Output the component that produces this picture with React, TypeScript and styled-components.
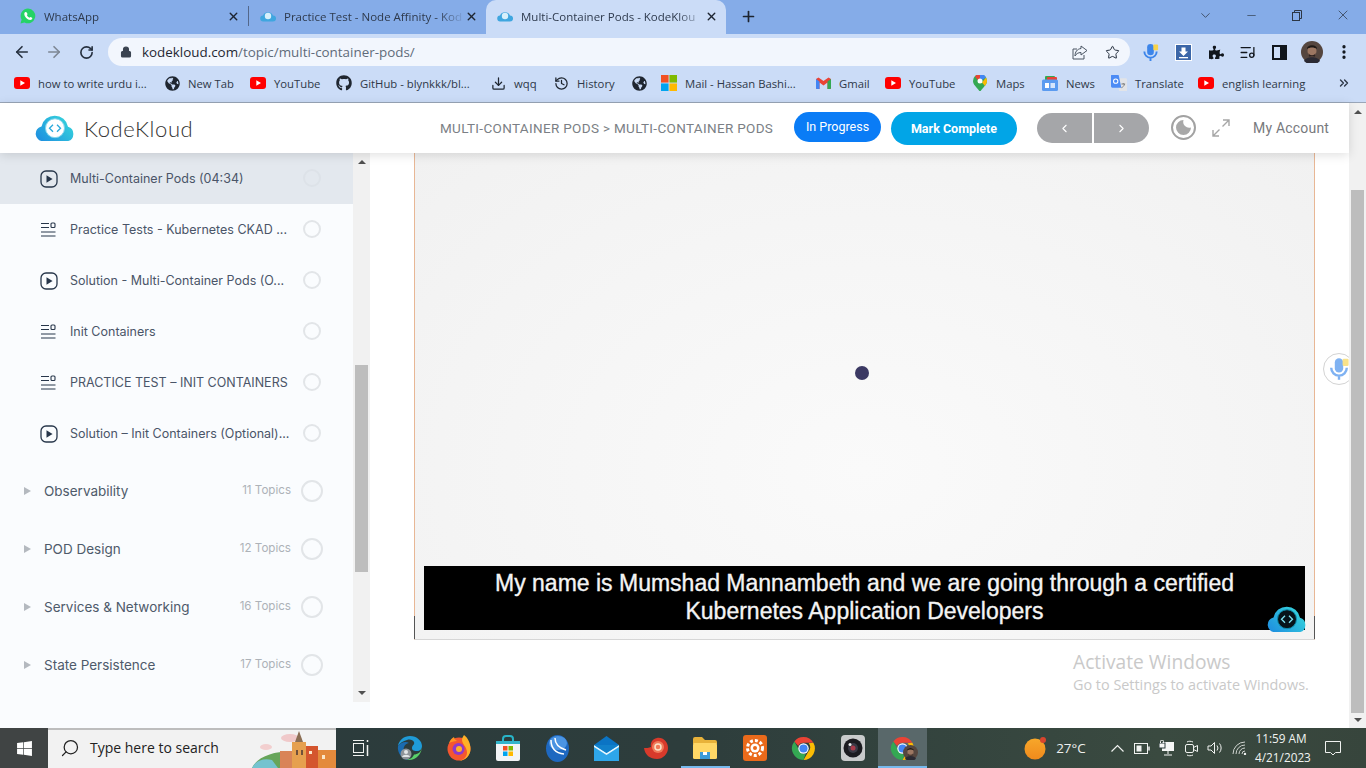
import React from "react";
import styled, { createGlobalStyle } from "styled-components";
import { FaGithub, FaGlobeAmericas, FaPuzzlePiece, FaWindows } from "react-icons/fa";
import { ArrowLeft, ArrowRight, RotateCw, Lock, Star, X, Plus, ChevronDown, Minus, Download, History, EllipsisVertical, ChevronsRight, ChevronLeft, ChevronRight, ListMusic, Search } from "lucide-react";

const Global = createGlobalStyle`
  html, body { margin: 0; padding: 0; background: #fff; overflow: hidden; }
  * { box-sizing: border-box; }
`;

const Screen = styled.div`
  width: 1366px; height: 768px; display: flex; flex-direction: column; overflow: hidden; position: relative;
  font-family: "Open Sans", "Noto Sans", sans-serif;
`;

/* Browser chrome */
const TabStrip = styled.div`
  height: 34px; background: #85ace8; display: flex; align-items: flex-end; padding-left: 8px; flex: none;
`;
const Tab = styled.div<{ $w: number; $active?: boolean; $pad: number }>`
  width: ${p => p.$w}px; height: 34px; display: flex; align-items: center; padding: 0 8px 2px ${p => p.$pad}px;
  background: ${p => (p.$active ? "#cbdcf7" : "transparent")}; border-radius: ${p => (p.$active ? "10px 10px 0 0" : "0")};
  font-size: 11.5px; color: #2e3a4d; flex: none;
`;
const TabTitle = styled.span`
  flex: 1; margin-left: 8px; overflow: hidden; white-space: nowrap;
  -webkit-mask-image: linear-gradient(to right, #000 85%, transparent);
  mask-image: linear-gradient(to right, #000 85%, transparent);
`;
const TabDivider = styled.div`
  width: 1px; height: 20px; background: #53678a; align-self: center; flex: none; margin-top: -2px;
`;
const NewTab = styled.div`
  width: 44px; height: 34px; padding-bottom: 2px; display: flex; align-items: center; justify-content: center; color: #1d2430; flex: none;
`;
const WindowControls = styled.div`
  margin-left: auto; display: flex; height: 34px; align-items: flex-start; color: #2c3644;
`;
const WinButton = styled.div`
  width: 46px; height: 30px; display: flex; align-items: center; justify-content: center;
`;

const Toolbar = styled.div`
  height: 34px; background: #cbdcf7; display: flex; align-items: center; padding: 2px 0 0 6px; flex: none;
`;
const ToolButton = styled.div<{ $w?: number; $c?: string }>`
  width: ${p => p.$w ?? 32}px; height: 28px; display: flex; align-items: center; justify-content: center; color: ${p => p.$c ?? "#26303f"}; flex: none;
`;
const UrlBar = styled.div`
  width: 1022px; height: 28px; margin: 0 4px 0 6px; background: #f2f6fd; border-radius: 14px; display: flex; align-items: center; padding-left: 12px; padding-right: 2px; flex: none; color: #3a4350;
`;
const UrlText = styled.div`
  margin-left: 10px; font-size: 13.4px; color: #5f6b7a; flex: 1; white-space: nowrap;
  b { font-weight: 400; color: #1f2733; }
`;

const BookmarkBar = styled.div`
  height: 35px; background: #cbdcf7; border-bottom: 1px solid #9aa6b8; display: flex; align-items: center; padding: 0 0 4px 14px; flex: none;
`;
const Bookmark = styled.div<{ $w: number }>`
  width: ${p => p.$w}px; display: flex; align-items: center; gap: 8px; font-size: 11.3px; color: #2e3848; white-space: nowrap; flex: none; overflow: hidden;
`;
const BmIcon = styled.span`
  width: 16px; height: 16px; display: flex; align-items: center; justify-content: center; flex: none;
`;
const BmMore = styled.div`
  margin-left: auto; margin-right: 15px; color: #2e3848; display: flex;
`;

/* Page */
const Page = styled.div`
  flex: 1; min-height: 0; display: flex; background: #fff;
`;
const PageMain = styled.div`
  flex: 1; min-width: 0; display: flex; flex-direction: column;
`;
const Header = styled.header`
  height: 50px; background: #fff; display: flex; align-items: center; padding-left: 35px; flex: none; position: relative; z-index: 3;
  box-shadow: 0 2px 10px rgba(0,0,0,.13);
`;
const Brand = styled.div`
  display: flex; align-items: center; gap: 9px; width: 405px; flex: none;
`;
const BrandName = styled.span`
  font-family: Lato, sans-serif; font-weight: 300; font-size: 22px; letter-spacing: .6px; color: #333;
`;
const Crumbs = styled.div`
  width: 354px; flex: none; font-family: Roboto, sans-serif; font-size: 13.5px; letter-spacing: .33px; color: #7b7f85; white-space: nowrap;
`;
const ProgressBtn = styled.div`
  width: 87px; height: 30px; margin-top: -3px; border-radius: 15px; background: #0a7cf6; color: #fff; font-family: Roboto, sans-serif; font-size: 12.5px;
  display: flex; align-items: center; justify-content: center; flex: none;
`;
const CompleteBtn = styled.div`
  width: 126px; height: 33px; margin-left: 10px; border-radius: 17px; background: #01a5e7; color: #fff; font-family: Roboto, sans-serif; font-weight: 700; font-size: 12.5px;
  display: flex; align-items: center; justify-content: center; flex: none;
`;
const Pager = styled.div`
  display: flex; gap: 2px; margin-left: 20px; flex: none;
`;
const PagerBtn = styled.div<{ $side: "l" | "r" }>`
  width: 55px; height: 30px; background: #a5a6a9; color: #fff; display: flex; align-items: center; justify-content: center;
  border-radius: ${p => (p.$side === "l" ? "15px 0 0 15px" : "0 15px 15px 0")};
`;
const ThemeToggle = styled.div`
  width: 25px; height: 25px; margin-left: 22px; margin-top: -1px; border-radius: 50%; border: 2px solid #a2a2a2; display: flex; align-items: center; justify-content: center; flex: none;
`;
const FullScreen = styled.div`
  margin-left: 15px; margin-top: -1px; display: flex; flex: none;
`;
const Account = styled.div`
  margin-left: 22px; font-family: Roboto, sans-serif; font-size: 14px; letter-spacing: .2px; color: #77797d; margin-top: -1px; white-space: nowrap;
`;

const Body = styled.div`
  flex: 1; min-height: 0; display: flex;
`;
const Sidebar = styled.aside`
  width: 370px; flex: none; display: flex; background: #fafcfe;
`;
const TopicList = styled.div`
  width: 353px; font-family: Inter, sans-serif; flex: none;
`;
const Lesson = styled.div<{ $active?: boolean }>`
  height: 51px; display: flex; align-items: center; padding-left: 40px; background: ${p => (p.$active ? "#e3e8ee" : "transparent")};
`;
const LessonIcon = styled.span`
  width: 18px; height: 18px; display: flex; align-items: center; flex: none;
`;
const LessonName = styled.div`
  width: 220px; margin-left: 12px; font-size: 12.5px; color: #4a5568; white-space: nowrap;
`;
const Check = styled.div<{ $size: number; $faint?: boolean }>`
  width: ${p => p.$size}px; height: ${p => p.$size}px; border-radius: 50%; border: 2px solid ${p => (p.$faint ? "#dde2e8" : "#e2e5e8")}; flex: none;
`;
const LessonCheck = styled(Check)`
  margin-left: 13px; margin-top: -1px;
`;
const Section = styled.div<{ $first?: boolean }>`
  height: 58px; display: flex; align-items: center; padding-left: 24px; margin-top: ${p => (p.$first ? "3px" : "0")};
`;
const Caret = styled.div`
  width: 0; height: 0; border-left: 7px solid #b4b9bf; border-top: 4.5px solid transparent; border-bottom: 4.5px solid transparent; flex: none;
`;
const SectionName = styled.div`
  margin-left: 13px; width: 190px; font-size: 13.5px; color: #4e5a6a; white-space: nowrap;
`;
const TopicCount = styled.div`
  width: 57px; text-align: right; font-size: 11.6px; color: #adb2b8; margin-top: -2px; white-space: nowrap; flex: none;
`;
const SectionCheck = styled(Check)`
  margin-left: 10px;
`;
const SideScroll = styled.div`
  width: 17px; height: 549px; background: #f1f1f1; display: flex; flex-direction: column; align-items: center; flex: none;
`;
const Arrow = styled.div<{ $dir: "up" | "down" }>`
  width: 0; height: 0; flex: none; border-left: 4px solid transparent; border-right: 4px solid transparent;
  ${p => (p.$dir === "up" ? "border-bottom: 4px solid #505050;" : "border-top: 4px solid #505050;")}
`;
const SideArrowUp = styled(Arrow)` margin-top: 7px; `;
const SideThumb = styled.div`
  width: 13px; height: 207px; margin-top: 201px; background: #bdbdbd; flex: none;
`;
const SideArrowDown = styled(Arrow)` margin-top: auto; margin-bottom: 7px; `;

const Content = styled.main`
  flex: 1; min-width: 0; padding: 0 34px 0 44px; position: relative; overflow: hidden;
`;
const Video = styled.div`
  height: 487px; background: radial-gradient(ellipse at 50% 65%, #fafafa 0%, #f6f6f6 45%, #f1f1f1 100%);
  border-left: 1px solid #e8b795; border-right: 1px solid #e8b795; border-bottom: 1px solid #d6d6d6;
  display: flex; flex-direction: column; justify-content: flex-end; padding: 0 9px 9px; position: relative;
  &::before, &::after { content: ""; position: absolute; bottom: 0; width: 1px; height: 23px; background: #555; }
  &::before { left: -1px; } &::after { right: -1px; }
`;
const Dot = styled.div`
  position: absolute; left: 440px; top: 213px; width: 14px; height: 14px; border-radius: 50%; background: #3b3963;
`;
const Caption = styled.div`
  height: 64px; background: #000; color: #f4f4f4; text-align: center; font-family: "Liberation Sans", Arial, sans-serif; font-size: 23px; line-height: 28px; padding-top: 3px;
  -webkit-text-stroke: .35px #f4f4f4;
`;
const VideoLogo = styled.div`
  position: absolute; right: 7px; bottom: 7px; display: flex;
`;
const FloatMic = styled.div`
  position: absolute; left: 953px; top: 200px; width: 32px; height: 32px; border-radius: 50%; background: #fff; border: 1px solid #d3d3d3; display: flex; align-items: center; justify-content: center;
`;
const Watermark = styled.div`
  position: absolute; left: 703px; top: 496px; color: #c9c9c9; font-family: "Open Sans", sans-serif; white-space: nowrap;
`;
const WmTitle = styled.div` font-size: 19.2px; line-height: 26px; `;
const WmSub = styled.div` font-size: 14.4px; line-height: 20px; `;

const PageScroll = styled.div`
  width: 17px; flex: none; background: #f1f1f1; display: flex; flex-direction: column; align-items: center;
`;
const PageArrowUp = styled(Arrow)` margin-top: 7px; `;
const PageThumb = styled.div`
  width: 13px; height: 523px; margin-top: 76px; background: #bdbdbd; flex: none;
`;
const PageArrowDown = styled(Arrow)` margin-top: auto; margin-bottom: 6px; `;

/* Taskbar */
const Taskbar = styled.footer`
  height: 40px; flex: none; display: flex; align-items: stretch; background: linear-gradient(to right, #2b3a3c, #2d3d3c 50%, #3a4a40 85%, #37453c);
  color: #f1f3f1; font-family: "Open Sans", sans-serif;
`;
const Start = styled.div`
  width: 48px; background: #404444; display: flex; align-items: center; justify-content: center; color: #fff; flex: none;
`;
const SearchBox = styled.div`
  width: 288px; background: #f2f2f2; border-top: 2px solid #bdbdbd; display: flex; align-items: center; padding: 0 0 3px 12px; position: relative; overflow: hidden; color: #222; font-size: 14px; flex: none;
`;
const SearchGlyph = styled(Search)` transform: scaleX(-1); flex: none; `;
const SearchText = styled.span` margin-left: 10px; `;
const Scene = styled.svg` position: absolute; right: 0; bottom: 0; `;
const TaskIcon = styled.div<{ $active?: boolean; $open?: boolean }>`
  width: 49.25px; display: flex; align-items: center; justify-content: center; flex: none; position: relative;
  background: ${p => (p.$active ? "#59686a" : "transparent")};
  border-bottom: 2px solid ${p => (p.$open ? "#76b9ed" : "transparent")};
  border-top: 2px solid transparent;
`;
const TaskBadge = styled.div`
  position: absolute; left: 25px; top: 15px; display: flex;
`;
const Tray = styled.div`
  margin-left: auto; display: flex; align-items: center; flex: none;
`;
const Weather = styled.div`
  display: flex; align-items: center; gap: 8px; font-size: 13.4px; margin-right: 20px; color: #eef0ee;
`;
const TrayIcon = styled.div`
  width: 24.4px; display: flex; align-items: center; justify-content: center; flex: none;
`;
const Clock = styled.div`
  width: 52px; margin-left: 3px; text-align: center; font-size: 11.8px; line-height: 19px; white-space: nowrap;
`;
const Notify = styled.div`
  width: 59px; display: flex; align-items: center; justify-content: center; padding-right: 7px;
`;

/* Drawings */
const KKLogo = ({ w = 40, dark = false }: { w?: number; dark?: boolean }) => (
  <svg width={w} height={w * 0.66} viewBox="0 0 40 26">
    <defs>
      <linearGradient id={dark ? "kkd" : "kkl"} x1="0" y1="1" x2="1" y2="0.3">
        <stop offset="0" stopColor="#1d8be0" />
        <stop offset="1" stopColor="#35d3dc" />
      </linearGradient>
    </defs>
    <path d="M8 26a7.5 7.5 0 0 1-1.5-14.8A13.5 13.5 0 0 1 33 11.5 7.5 7.5 0 0 1 32.5 26Z" fill={`url(#${dark ? "kkd" : "kkl"})`} />
    <circle cx="20" cy="13" r="9.5" fill={dark ? "#07131a" : "#fff"} stroke={dark ? "#0d8fb0" : "#7fd4ec"} strokeWidth="1" />
    <path d="M18 9.5 14.5 13l3.5 3.5M22 9.5l3.5 3.5-3.5 3.5" fill="none" stroke={dark ? "#7fe2f0" : "#29a9dc"} strokeWidth="1.3" />
  </svg>
);
const Favicon = () => (
  <svg width="16" height="12" viewBox="0 0 16 12">
    <path d="M3.5 11.5a3 3 0 0 1-.5-6A5.5 5.5 0 0 1 13 5.4a3 3 0 0 1 0 6.1Z" fill="#3fa6df" />
    <circle cx="8" cy="6" r="3.2" fill="#d7f0fb" />
  </svg>
);
const PlayIcon = () => (
  <svg width="18" height="18" viewBox="0 0 18 18" fill="none">
    <rect x="1" y="1" width="16" height="16" rx="5" stroke="#27364a" strokeWidth="1.3" />
    <path d="M6.5 5.3v7.4L12.6 9Z" fill="#27364a" />
  </svg>
);
const QuizIcon = () => (
  <svg width="16" height="16" viewBox="0 0 16 16" fill="none" stroke="#27364a" strokeWidth="1.1">
    <path d="M1 1.500h8M1 5.500h8M1 10h14.500M1 14h14.500" />
    <rect x="11" y="1" width="4" height="4.500" rx="1" />
  </svg>
);
const Moon = () => (
  <svg width="17" height="17" viewBox="0 0 17 17"><path d="M8.5 1a7.5 7.5 0 1 0 7.5 7.5A6 6 0 0 1 8.5 1Z" fill="#a8a8a8" /></svg>
);
const ExpandDiag = () => (
  <svg width="20" height="20" viewBox="0 0 20 20" fill="none" stroke="#a6a6a6" strokeWidth="1.4">
    <path d="M12 2h6v6M18 2l-6.500 6.500M8 18H2v-6M2 18l6.500-6.500" />
  </svg>
);
const Mic = ({ s = 20 }: { s?: number }) => (
  <svg width={s} height={s} viewBox="0 0 20 20" fill="none">
    <rect x="6.5" y="1" width="7" height="12" rx="3.5" fill="#3c85ea" />
    <path d="M3.5 9a6.5 6.5 0 0 0 13 0M10 15.5V19" stroke="#3c85ea" strokeWidth="2" />
    <rect x="13" y="1.5" width="5" height="6" rx="1" fill="#f8d34a" />
  </svg>
);
const FloatingMicIcon = () => (
  <svg width="24" height="24" viewBox="0 0 20 20" fill="none">
    <rect x="6.5" y="1" width="7" height="12" rx="3.5" fill="#7fb2f2" />
    <path d="M3.5 9a6.5 6.5 0 0 0 13 0M10 15.5V19" stroke="#7fb2f2" strokeWidth="2" />
    <rect x="13" y="1.5" width="5" height="6" rx="1" fill="#f8e28a" />
  </svg>
);
const Microsoft = () => (
  <svg width="18" height="18" viewBox="0 0 18 18">
    <rect width="8.5" height="8.5" fill="#f25022" /><rect x="9.5" width="8.5" height="8.5" fill="#7fba00" />
    <rect y="9.5" width="8.5" height="8.5" fill="#00a4ef" /><rect x="9.5" y="9.5" width="8.5" height="8.5" fill="#ffb900" />
  </svg>
);
const Gmail = () => (
  <svg width="15" height="12" viewBox="0 0 15 12">
    <path d="M0 2v9a1 1 0 0 0 1 1h2.5V5.5L7.500 8.500 11.500 5.500V12H14a1 1 0 0 0 1-1V2L12.500.5 7.500 4 2.500.5Z" fill="#ea4335" />
    <path d="M0 11V2l3.500 2.600V12H1a1 1 0 0 1-1-1Z" fill="#4285f4" />
    <path d="M15 11V2l-3.500 2.600V12H14a1 1 0 0 0 1-1Z" fill="#34a853" />
  </svg>
);
const Maps = () => (
  <svg width="14" height="18" viewBox="0 0 14 18">
    <path d="M7 0a7 7 0 0 1 7 7c0 4-4 6-7 11C4 13 0 11 0 7a7 7 0 0 1 7-7Z" fill="#34a853" />
    <path d="M2 2.500A7 7 0 0 1 7 0v4.500A2.500 2.500 0 0 0 4.700 6Z" fill="#ea4335" />
    <path d="M7 0a7 7 0 0 1 6 3.500L9.200 6A2.500 2.500 0 0 0 7 4.500Z" fill="#4285f4" />
    <path d="M13 3.500A7 7 0 0 1 14 7c0 2-1 3.500-2 5L9 8.500Z" fill="#fbbc04" />
    <circle cx="7" cy="7" r="2.500" fill="#fff" />
  </svg>
);
const News = () => (
  <svg width="16" height="15" viewBox="0 0 16 15">
    <rect x="3" y="0" width="10" height="6" rx="1" fill="#34a853" />
    <rect x="5" y="1" width="10" height="6" rx="1" fill="#ea4335" />
    <rect x="0" y="3.500" width="16" height="11.500" rx="1.500" fill="#5b9bf0" />
    <rect x="3" y="7" width="4" height="5" fill="#fff" /><rect x="8.500" y="7" width="4.500" height="5" fill="#d6e6fc" />
  </svg>
);
const Translate = () => (
  <svg width="17" height="19" viewBox="0 0 17 19">
    <path d="M6 4h9.500a1.500 1.500 0 0 1 1.500 1.500v12a1.500 1.500 0 0 1-1.500 1.500H9Z" fill="#e2e4e8" />
    <path d="M1.500 0H8l3 14H1.500A1.500 1.500 0 0 1 0 12.500v-11A1.500 1.500 0 0 1 1.500 0Z" fill="#4c8bf5" />
    <circle cx="5" cy="7" r="2.300" fill="none" stroke="#fff" strokeWidth="1.100" />
    <path d="M11 10h4M13 9v1.500M14.500 10c-.5 2-2 3.500-3.500 4" stroke="#777" fill="none" strokeWidth=".9" />
  </svg>
);
const WhatsAppBadge = () => (
  <svg width="16" height="16" viewBox="0 0 16 16"><path d="M8 .5A7.400 7.400 0 0 0 1.600 11.600L.5 15.500l4-1A7.400 7.400 0 1 0 8 .5Z" fill="#25d366" /><path d="M5.300 4c-.5.3-1 1-1 1.900 0 2.600 3.200 6 6 6 1 0 1.700-.6 2-1.200l-.2-1-1.800-.8-.8.900c-1-.3-2.300-1.600-2.700-2.700l.8-.8-.8-1.900Z" fill="#fff" /></svg>
);
const YT = () => (
  <svg width="16" height="12" viewBox="0 0 16 12"><rect width="16" height="12" rx="3" fill="#f00" /><path d="M6.300 3.300v5.400L11 6Z" fill="#fff" /></svg>
);
const Chrome = ({ s = 24 }: { s?: number }) => (
  <svg width={s} height={s} viewBox="0 0 24 24">
    <path d="M12 1a11 11 0 0 1 9.500 5.500H12a5.500 5.500 0 0 0-5 3.200L3.200 5.300A11 11 0 0 1 12 1Z" fill="#ea4335" />
    <path d="M21.500 6.500A11 11 0 0 1 12 23l4.600-8A5.500 5.500 0 0 0 16.900 7Z" fill="#fbbc04" />
    <path d="M12 23A11 11 0 0 1 3.200 5.300L7.800 13.500A5.500 5.500 0 0 0 14 17.200Z" fill="#34a853" />
    <circle cx="12" cy="12" r="5" fill="#fff" /><circle cx="12" cy="12" r="3.900" fill="#4285f4" />
  </svg>
);
const Avatar = ({ s = 22 }: { s?: number }) => (
  <svg width={s} height={s} viewBox="0 0 22 22">
    <circle cx="11" cy="11" r="11" fill="#55463f" />
    <path d="M3 20c2-5 14-5 16 0a11 11 0 0 1-16 0Z" fill="#2b2a33" />
    <ellipse cx="11" cy="10" rx="4.500" ry="5.500" fill="#9c7762" />
    <path d="M6 8c0-5 10-5 10 0-3-2-7-2-10 0Z" fill="#1e1916" />
    <path d="M7.500 12c1 3 6 3 7 0l-.5 3.500h-6Z" fill="#2e2320" />
  </svg>
);
const ExtDownload = () => (
  <svg width="17" height="17" viewBox="0 0 17 17">
    <rect width="17" height="17" fill="#fff" /><rect x="1" y="1" width="15" height="15" fill="#3b66a8" />
    <path d="M6.500 3.500h4v4h2.500l-4.500 4.500L4 7.500h2.500Z" fill="#fff" /><rect x="4" y="13" width="9" height="1.300" fill="#fff" />
  </svg>
);
const SidePanel = () => (
  <svg width="15" height="15" viewBox="0 0 15 15"><rect x="1" y="1" width="13" height="13" fill="none" stroke="#10151c" strokeWidth="2" /><rect x="8" y="1" width="6" height="13" fill="#10151c" /></svg>
);
const Restore = () => (
  <svg width="10" height="11" viewBox="0 0 10 11" fill="none" stroke="#2c3644"><rect x=".5" y="2.500" width="7" height="8" /><path d="M2.500 2.500V.5h7v8h-2" /></svg>
);
const ShareIcon = () => (
  <svg width="16" height="16" viewBox="0 0 16 16" fill="none" stroke="#4a5563" strokeWidth="1"><path d="M9 2l6 4.500L9 11V8.500C6 8.500 4 10 3 12c0-4 2-7 6-7.500Z" /><path d="M12 11v4H1V5h4" /></svg>
);
const TaskView = () => (
  <svg width="16" height="16" viewBox="0 0 16 16" fill="none" stroke="#f0f2f0"><path d="M0 .5h11M0 15.500h11" /><rect x=".5" y="3.500" width="10" height="9" /><path d="M14.500 0v2M14.500 5v11" strokeWidth="1.500" /></svg>
);
const Edge = () => (
  <svg width="26" height="26" viewBox="0 0 26 26">
    <path d="M1 11C2 5 7 1 13 1c7 0 12 5 12 10 0 3-2 5-5 5-4 0-5-1-5-3 0-3 3-3 2-6-1-2-4-3-7-2C6 6 3 8 1 11Z" fill="#1f9bd8" />
    <path d="M25 11c0 8-6 14-13 14-1 0-2 0-3-.500 4 0 7-2 8-5 3 0 8-2 8-8.500Z" fill="#5ad06a" />
    <path d="M1 11c3-4 8-5 11-3-5 1-6 5-5 9 .5 3 2 6 4 8C5 24 0 18 1 11Z" fill="#1a6bb0" />
    <circle cx="9" cy="19" r="5.500" fill="#8f9499" /><circle cx="9" cy="17" r="2" fill="#e3e6e8" /><path d="M5 22c1-3 7-3 8 0Z" fill="#e3e6e8" />
  </svg>
);
const Firefox = () => (
  <svg width="24" height="26" viewBox="0 0 24 26">
    <circle cx="12" cy="14" r="11.500" fill="#f4562f" />
    <path d="M23.500 14A11.500 11.500 0 0 1 12 25.500c5 0 8-4 8-8 0-6-5-8-5-13C15 3 16 1.500 17 0c4 3 6.500 8 6.500 14Z" fill="#ffb028" />
    <circle cx="11.500" cy="14" r="6" fill="#8f3ac9" /><circle cx="12" cy="14" r="3" fill="#ffb028" />
    <path d="M2 8c1-3 3-5 5-6 0 2 2 3 3 4-3 0-6 1-8 2Z" fill="#ff9423" />
  </svg>
);
const Store = () => (
  <svg width="24" height="26" viewBox="0 0 24 26">
    <rect y="6" width="24" height="20" rx="2" fill="#f2f4f6" />
    <path d="M7 8V4a3 3 0 0 1 3-3h4a3 3 0 0 1 3 3v4" fill="none" stroke="#28b4c8" strokeWidth="2" />
    <rect y="6" width="24" height="3" fill="#32b5cb" />
    <rect x="7" y="11" width="4.500" height="4.500" fill="#f25022" /><rect x="12.500" y="11" width="4.500" height="4.500" fill="#7fba00" />
    <rect x="7" y="16.500" width="4.500" height="4.500" fill="#00a4ef" /><rect x="12.500" y="16.500" width="4.500" height="4.500" fill="#ffb900" />
  </svg>
);
const WinBox = () => (
  <svg width="23" height="27" viewBox="0 0 23 27">
    <ellipse cx="11.500" cy="13.500" rx="11.500" ry="13.500" fill="#1e68c0" />
    <ellipse cx="12" cy="8" rx="9" ry="7" fill="#4b94e2" />
    <path d="M5 5c0 8 4 13 13 14M9 3c0 7 4 10 11 12" fill="none" stroke="#fff" strokeWidth="1.500" />
  </svg>
);
const Mail = () => (
  <svg width="25" height="25" viewBox="0 0 25 25">
    <path d="M0 9 12.500 0 25 9v16H0Z" fill="#0b74c4" /><rect y="9" width="25" height="16" fill="#2ea6ea" />
    <path d="M0 9l12.500 8L25 9v2l-12.500 8L0 11Z" fill="#e9f6fd" />
    <path d="M0 9h25l-12.500 8Z" fill="#1180ca" />
  </svg>
);
const Shell = () => (
  <svg width="26" height="24" viewBox="0 0 26 24">
    <path d="M1 12c1 7 6 11 13 11 6 0 11-5 11-11S20 1 14 2C9 3 7 7 8 11c-2 1-5 1-7 1Z" fill="#d83a2b" />
    <circle cx="15" cy="11" r="6" fill="#f07a5a" /><circle cx="15" cy="11" r="3" fill="none" stroke="#fbe3c8" strokeWidth="1.500" />
  </svg>
);
const Folder = () => (
  <svg width="24" height="22" viewBox="0 0 24 22">
    <path d="M0 2a2 2 0 0 1 2-2h7l3 3h10a2 2 0 0 1 2 2v2H0Z" fill="#e8b23a" />
    <rect y="6" width="24" height="16" rx="1.500" fill="#ffd766" />
    <rect x="7" y="15" width="10" height="7" fill="#3b9bd8" /><rect x="10" y="15" width="4" height="3" fill="#fff" />
  </svg>
);
const GearApp = () => (
  <svg width="24" height="26" viewBox="0 0 24 26">
    <rect width="24" height="26" rx="3" fill="#ea6a1b" />
    <circle cx="12" cy="13" r="7.500" fill="none" stroke="#fff" strokeWidth="3" strokeDasharray="3 2" />
    <circle cx="12" cy="13" r="4.500" fill="#fff" /><circle cx="12" cy="13" r="2" fill="#ea6a1b" />
  </svg>
);
const Camera = () => (
  <svg width="24" height="26" viewBox="0 0 24 26">
    <rect width="24" height="26" rx="4" fill="#c9cbcc" />
    <circle cx="12" cy="13" r="9.500" fill="#1b1b20" /><circle cx="12" cy="13" r="5" fill="#3a3a46" /><circle cx="12" cy="13" r="2.500" fill="#a83a4a" /><circle cx="9" cy="9.500" r="1.500" fill="#eee" />
  </svg>
);
const WeatherBall = () => (
  <svg width="24" height="24" viewBox="0 0 24 24">
    <defs><linearGradient id="sun" x1="0" y1="0" x2="0" y2="1"><stop offset="0" stopColor="#f7a72a" /><stop offset="1" stopColor="#f08a1c" /></linearGradient></defs>
    <circle cx="11" cy="13" r="10.500" fill="url(#sun)" /><circle cx="19" cy="4" r="3" fill="#d8452e" />
  </svg>
);
const TrayBattery = () => (
  <svg width="16" height="11" viewBox="0 0 16 11" fill="none" stroke="#f0f2f0"><rect x=".5" y=".5" width="13" height="10" /><rect x="2.500" y="2.500" width="5" height="6" fill="#f0f2f0" stroke="none" /><path d="M15 3.500v4" strokeWidth="1.500" /></svg>
);
const TrayNetwork = () => (
  <svg width="15" height="16" viewBox="0 0 15 16"><rect x="3" y="2" width="12" height="9" fill="#f6f7f6" /><path d="M9 11v3M5 15h8" stroke="#f6f7f6" /><rect x="0" y="3" width="6" height="5" fill="#f6f7f6" stroke="#2d3d3c" /><path d="M1.500 3V1.500a1.500 1.500 0 0 1 3 0V3" fill="none" stroke="#f6f7f6" /></svg>
);
const TrayCamera = () => (
  <svg width="13" height="17" viewBox="0 0 13 17" fill="none" stroke="#f0f2f0"><rect x=".5" y="4.500" width="8" height="8" rx="1.500" /><path d="M8.500 7.500 12.500 5.500v6l-4-2M2 2c1.500-1 4-1 6 0M2 15c1.500 1 4 1 6 0" /></svg>
);
const TraySpeaker = () => (
  <svg width="16" height="14" viewBox="0 0 16 14" fill="none" stroke="#f0f2f0"><path d="M1 5h3l3.500-3.500v11L4 9H1ZM10 4.500a4 4 0 0 1 0 5M12.500 2.500a7 7 0 0 1 0 9" /></svg>
);
const TrayWifi = () => (
  <svg width="15" height="14" viewBox="0 0 15 14" fill="none" stroke="#cfd3cf"><path d="M1 13A12 12 0 0 1 13 1M4 13a9 9 0 0 1 9-9M7 13a6 6 0 0 1 6-6M10 13a3 3 0 0 1 3-3" /><circle cx="13" cy="13" r="1.200" fill="#f0f2f0" stroke="none" /></svg>
);
const TrayUp = () => (
  <svg width="13" height="8" viewBox="0 0 13 8" fill="none" stroke="#f0f2f0" strokeWidth="1.200"><path d="M.5 7.500 6.500 1.500l6 6" /></svg>
);
const ActionCenter = () => (
  <svg width="16" height="15" viewBox="0 0 16 15" fill="none" stroke="#f0f2f0"><path d="M.5.500h15v11h-5L8 14l-2.500-2.500h-5Z" /></svg>
);
const CityScene = () => (
  <Scene width="84" height="38" viewBox="0 0 84 38">
    <ellipse cx="14" cy="17" rx="6" ry="3" fill="#f2cfcf" />
    <ellipse cx="38" cy="8" rx="9" ry="4" fill="#f0c9ca" />
    <path d="M0 38c6-14 30-18 44-16l40 2v14Z" fill="#67a55a" />
    <path d="M0 38c4-8 12-10 20-8l6 8Z" fill="#74c3cf" />
    <rect x="28" y="21" width="14" height="17" fill="#d98458" />
    <rect x="40" y="12" width="14" height="26" fill="#e6a04f" />
    <path d="M47 1l4 11h-8Z" fill="#8b6e54" />
    <rect x="54" y="16" width="12" height="22" fill="#d4552e" />
    <rect x="66" y="20" width="18" height="18" fill="#e48a3c" />
    <rect x="44" y="20" width="2" height="5" fill="#70503a" /><rect x="49" y="20" width="2" height="5" fill="#70503a" />
    <rect x="57" y="21" width="3" height="3" fill="#fbe6c8" /><rect x="70" y="25" width="3" height="4" fill="#fbe6c8" />
  </Scene>
);

const lessons: { name: string; kind: "play" | "quiz" }[] = [
  { name: "Multi-Container Pods (04:34)", kind: "play" },
  { name: "Practice Tests - Kubernetes CKAD ...", kind: "quiz" },
  { name: "Solution - Multi-Container Pods (O...", kind: "play" },
  { name: "Init Containers", kind: "quiz" },
  { name: "PRACTICE TEST – INIT CONTAINERS", kind: "quiz" },
  { name: "Solution – Init Containers (Optional)...", kind: "play" },
];
const sections = [
  ["Observability", "11 Topics"],
  ["POD Design", "12 Topics"],
  ["Services & Networking", "16 Topics"],
  ["State Persistence", "17 Topics"],
];
const bookmarks: { w: number; icon: React.ReactNode; label?: string }[] = [
  { w: 150, icon: <YT />, label: "how to write urdu i..." },
  { w: 86, icon: <FaGlobeAmericas size={15} color="#1f2630" />, label: "New Tab" },
  { w: 86, icon: <YT />, label: "YouTube" },
  { w: 154, icon: <FaGithub size={16} color="#1f2630" />, label: "GitHub - blynkkk/bl..." },
  { w: 63, icon: <Download size={15} color="#1f2630" />, label: "wqq" },
  { w: 78, icon: <History size={15} color="#1f2630" />, label: "History" },
  { w: 30, icon: <FaGlobeAmericas size={15} color="#1f2630" /> },
  { w: 154, icon: <Microsoft />, label: "Mail - Hassan Bashi..." },
  { w: 70, icon: <Gmail />, label: "Gmail" },
  { w: 87, icon: <YT />, label: "YouTube" },
  { w: 70, icon: <Maps />, label: "Maps" },
  { w: 69, icon: <News />, label: "News" },
  { w: 87, icon: <Translate />, label: "Translate" },
  { w: 115, icon: <YT />, label: "english learning" },
];
const taskApps: { node: React.ReactNode; open?: boolean; active?: boolean; badge?: boolean }[] = [
  { node: <TaskView /> }, { node: <Edge /> }, { node: <Firefox /> }, { node: <Store /> }, { node: <WinBox /> }, { node: <Mail /> },
  { node: <Shell /> }, { node: <Folder />, open: true }, { node: <GearApp /> }, { node: <Chrome s={25} /> }, { node: <Camera /> },
  { node: <Chrome s={25} />, open: true, active: true, badge: true },
];

export default function App() {
  return (
    <Screen>
      <Global />
      <TabStrip>
        <Tab $w={240} $pad={12}>
          <BmIcon><WhatsAppBadge /></BmIcon>
          <TabTitle>WhatsApp</TabTitle>
          <X size={13} strokeWidth={2.6} color="#1d2430" />
        </Tab>
        <TabDivider />
        <Tab $w={237} $pad={11}>
          <BmIcon><Favicon /></BmIcon>
          <TabTitle>Practice Test - Node Affinity - Kod</TabTitle>
          <X size={13} strokeWidth={2.6} color="#1d2430" />
        </Tab>
        <Tab $w={240} $active $pad={11}>
          <BmIcon><Favicon /></BmIcon>
          <TabTitle>Multi-Container Pods - KodeKlou</TabTitle>
          <X size={13} strokeWidth={2.6} color="#1d2430" />
        </Tab>
        <NewTab><Plus size={17} strokeWidth={2.4} /></NewTab>
        <WindowControls>
          <WinButton><ChevronDown size={15} strokeWidth={1.2} /></WinButton>
          <WinButton><Minus size={13} strokeWidth={1.2} /></WinButton>
          <WinButton><Restore /></WinButton>
          <WinButton><X size={16} strokeWidth={1.1} /></WinButton>
        </WindowControls>
      </TabStrip>

      <Toolbar>
        <ToolButton><ArrowLeft size={18} strokeWidth={2.2} /></ToolButton>
        <ToolButton $c="#7d8794"><ArrowRight size={18} strokeWidth={2.2} /></ToolButton>
        <ToolButton><RotateCw size={15} strokeWidth={2.6} /></ToolButton>
        <UrlBar>
          <Lock size={12} fill="#3a4350" strokeWidth={2.2} />
          <UrlText><b>kodekloud.com</b>/topic/multi-container-pods/</UrlText>
          <ToolButton><ShareIcon /></ToolButton>
          <ToolButton><Star size={15} strokeWidth={1.6} /></ToolButton>
        </UrlBar>
        <ToolButton $w={33}><Mic s={19} /></ToolButton>
        <ToolButton $w={33}><ExtDownload /></ToolButton>
        <ToolButton $w={32} $c="#11161d"><FaPuzzlePiece size={15} /></ToolButton>
        <ToolButton $w={31} $c="#11161d"><ListMusic size={17} strokeWidth={1.8} /></ToolButton>
        <ToolButton $w={33}><SidePanel /></ToolButton>
        <ToolButton $w={32}><Avatar /></ToolButton>
        <ToolButton $w={32} $c="#11161d"><EllipsisVertical size={18} strokeWidth={2.4} /></ToolButton>
      </Toolbar>

      <BookmarkBar>
        {bookmarks.map((b, i) => (
          <Bookmark key={i} $w={b.w}>
            <BmIcon>{b.icon}</BmIcon>
            {b.label && <span>{b.label}</span>}
          </Bookmark>
        ))}
        <BmMore><ChevronsRight size={14} strokeWidth={2.4} /></BmMore>
      </BookmarkBar>

      <Page>
        <PageMain>
          <Header>
            <Brand>
              <KKLogo />
              <BrandName>KodeKloud</BrandName>
            </Brand>
            <Crumbs>MULTI-CONTAINER PODS &gt; MULTI-CONTAINER PODS</Crumbs>
            <ProgressBtn>In Progress</ProgressBtn>
            <CompleteBtn>Mark Complete</CompleteBtn>
            <Pager>
              <PagerBtn $side="l"><ChevronLeft size={13} strokeWidth={2} /></PagerBtn>
              <PagerBtn $side="r"><ChevronRight size={13} strokeWidth={2} /></PagerBtn>
            </Pager>
            <ThemeToggle><Moon /></ThemeToggle>
            <FullScreen><ExpandDiag /></FullScreen>
            <Account>My Account</Account>
          </Header>
          <Body>
            <Sidebar>
              <TopicList>
                {lessons.map((l, i) => (
                  <Lesson key={l.name} $active={i === 0}>
                    <LessonIcon>{l.kind === "play" ? <PlayIcon /> : <QuizIcon />}</LessonIcon>
                    <LessonName>{l.name}</LessonName>
                    <LessonCheck $size={18} $faint={i === 0} />
                  </Lesson>
                ))}
                {sections.map(([name, count], i) => (
                  <Section key={name} $first={i === 0}>
                    <Caret />
                    <SectionName>{name}</SectionName>
                    <TopicCount>{count}</TopicCount>
                    <SectionCheck $size={22} />
                  </Section>
                ))}
              </TopicList>
              <SideScroll>
                <SideArrowUp $dir="up" />
                <SideThumb />
                <SideArrowDown $dir="down" />
              </SideScroll>
            </Sidebar>
            <Content>
              <Video>
                <Dot />
                <Caption>
                  My name is Mumshad Mannambeth and we are going through a certified<br />
                  Kubernetes Application Developers
                </Caption>
                <VideoLogo><KKLogo dark /></VideoLogo>
              </Video>
              <Watermark>
                <WmTitle>Activate Windows</WmTitle>
                <WmSub>Go to Settings to activate Windows.</WmSub>
              </Watermark>
              <FloatMic><FloatingMicIcon /></FloatMic>
            </Content>
          </Body>
        </PageMain>
        <PageScroll>
          <PageArrowUp $dir="up" />
          <PageThumb />
          <PageArrowDown $dir="down" />
        </PageScroll>
      </Page>

      <Taskbar>
        <Start><FaWindows size={17} /></Start>
        <SearchBox>
          <SearchGlyph size={20} strokeWidth={1.5} />
          <SearchText>Type here to search</SearchText>
          <CityScene />
        </SearchBox>
        {taskApps.map((t, i) => (
          <TaskIcon key={i} $open={t.open} $active={t.active}>
            {t.node}
            {t.badge && <TaskBadge><Avatar s={15} /></TaskBadge>}
          </TaskIcon>
        ))}
        <Tray>
          <Weather><WeatherBall /><span>27°C</span></Weather>
          <TrayIcon><TrayUp /></TrayIcon>
          <TrayIcon><TrayBattery /></TrayIcon>
          <TrayIcon><TrayNetwork /></TrayIcon>
          <TrayIcon><TrayCamera /></TrayIcon>
          <TrayIcon><TraySpeaker /></TrayIcon>
          <TrayIcon><TrayWifi /></TrayIcon>
          <Clock>11:59 AM<br />4/21/2023</Clock>
          <Notify><ActionCenter /></Notify>
        </Tray>
      </Taskbar>
    </Screen>
  );
}
